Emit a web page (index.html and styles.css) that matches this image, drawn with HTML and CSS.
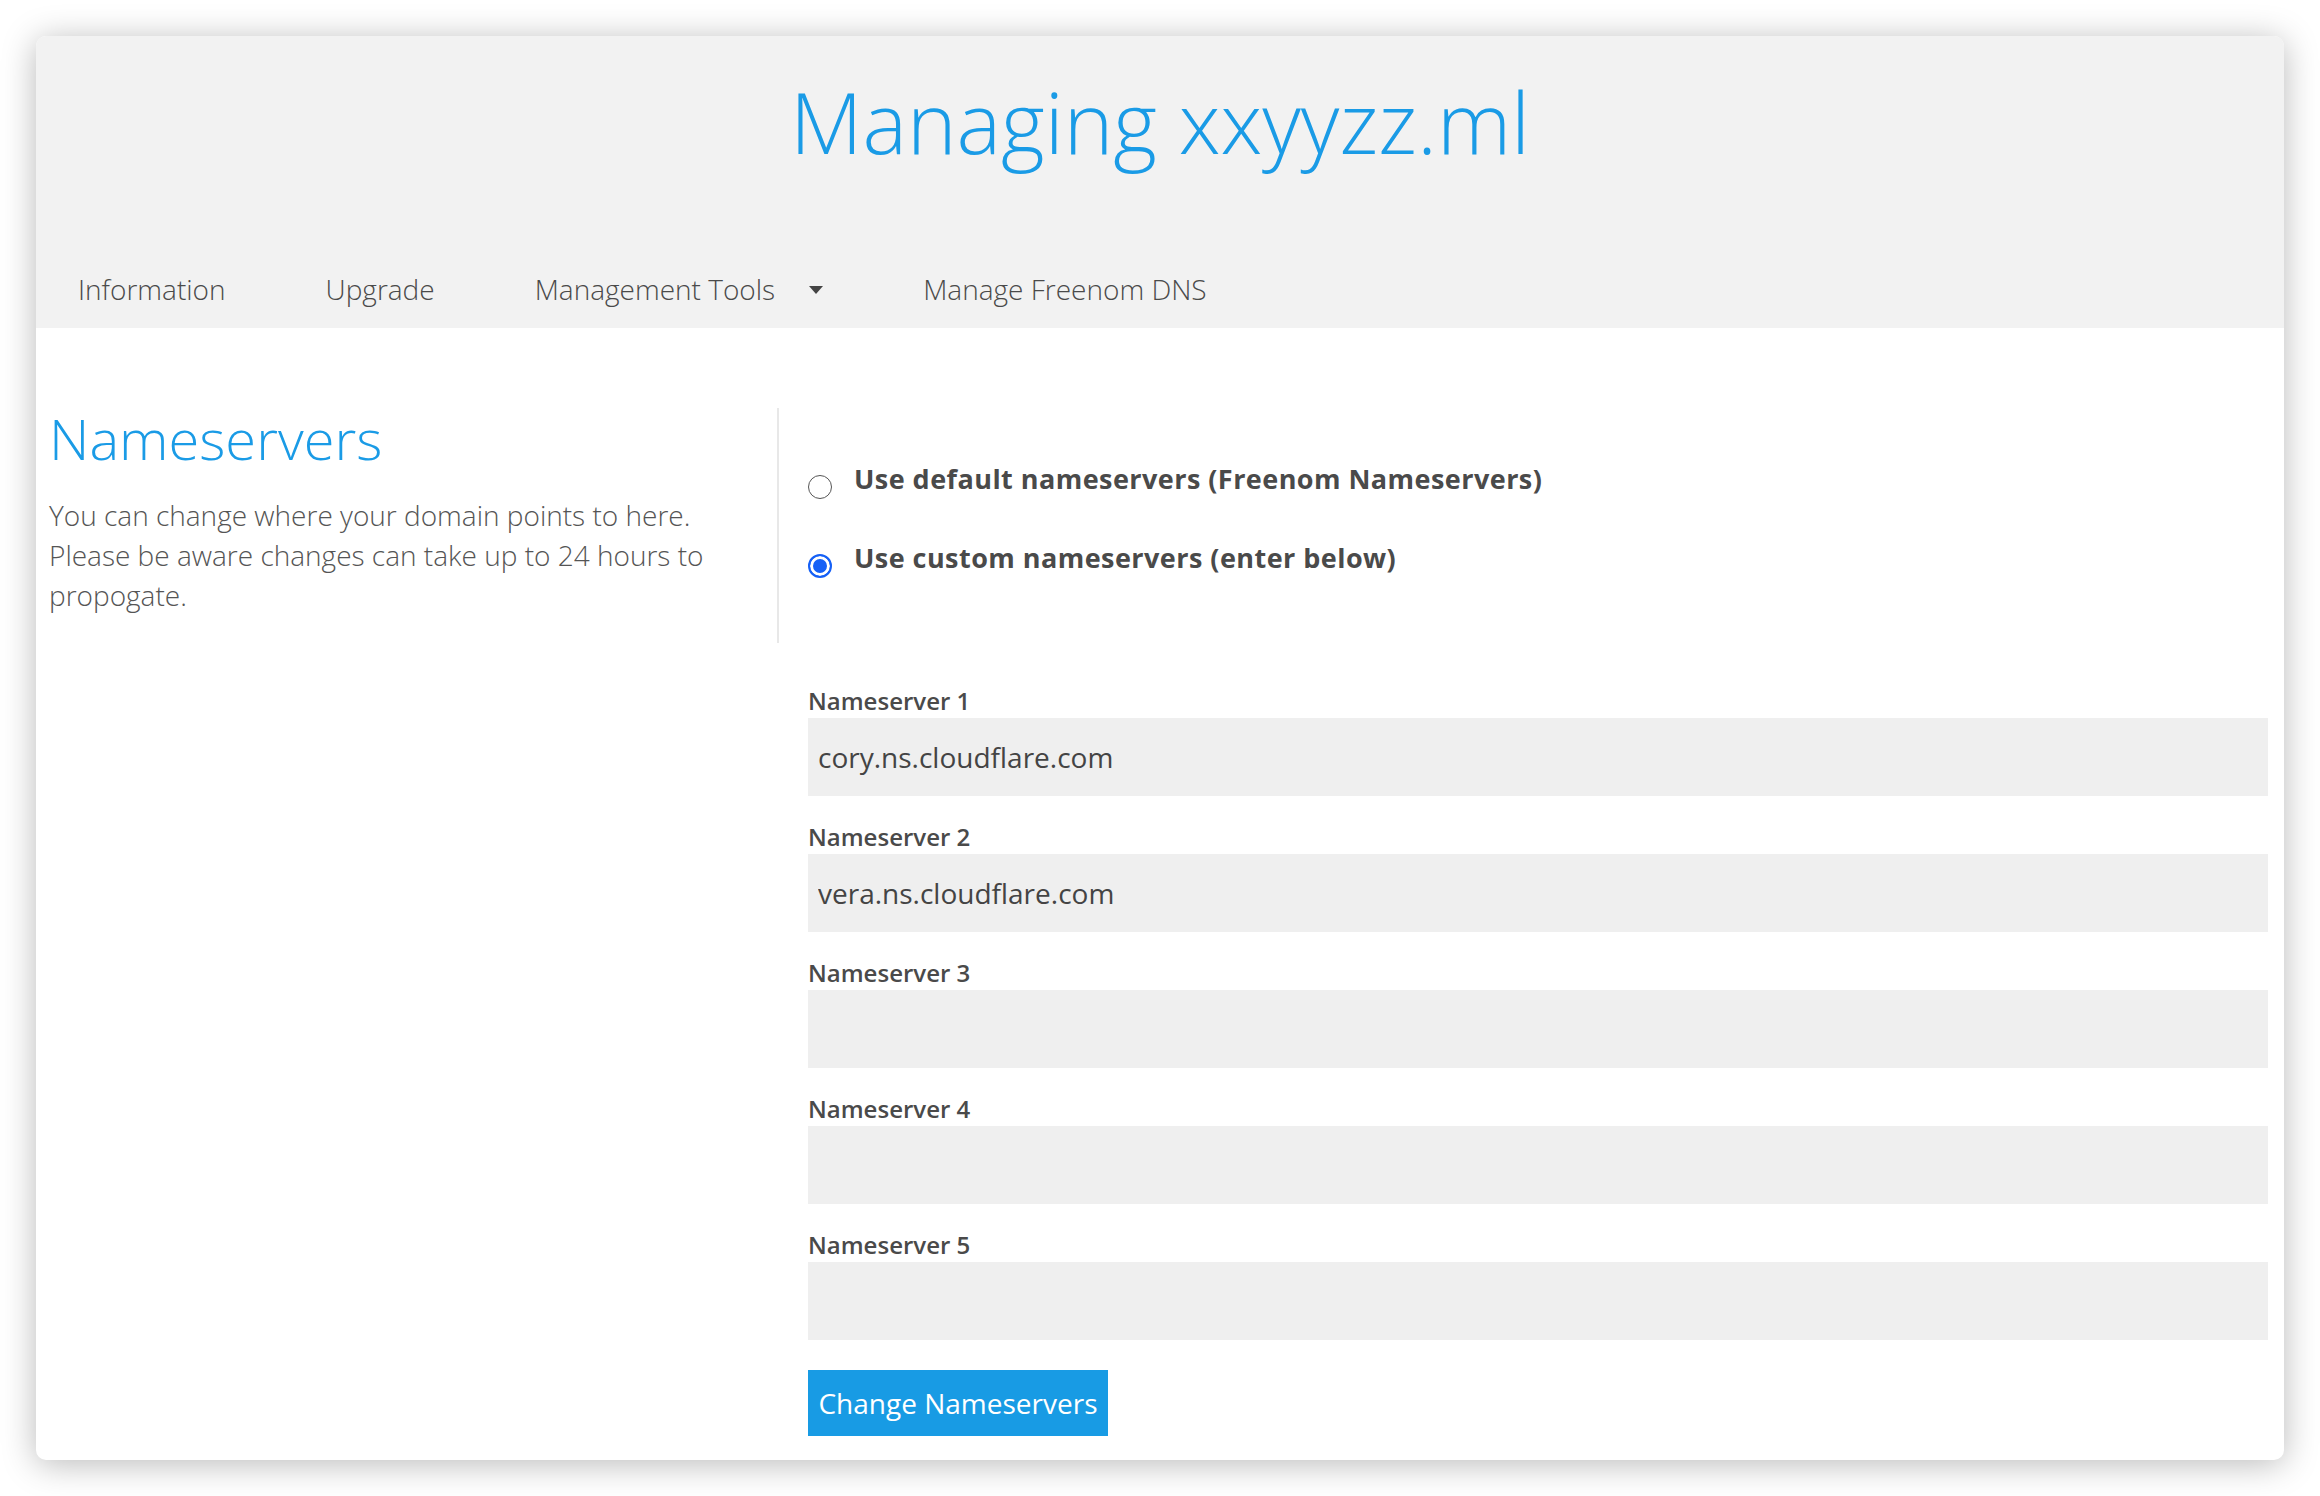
FILE: index.html
```html
<!DOCTYPE html>
<html lang="en">
<head>
<meta charset="utf-8">
<title>Managing xxyyzz.ml</title>
<link rel="stylesheet" href="styles.css">
</head>
<body>
<div class="window">
  <header class="top">
    <h1 class="title">Managing xxyyzz.ml</h1>
    <nav class="tabs">
      <a class="tab">Information</a>
      <a class="tab">Upgrade</a>
      <a class="tab">Management Tools<span class="caret"></span></a>
      <a class="tab">Manage Freenom DNS</a>
    </nav>
  </header>
  <main class="content">
    <section class="intro">
      <h2 class="intro-title">Nameservers</h2>
      <p class="intro-text">You can change where your domain points to here. Please be aware changes can take up to 24 hours to propogate.</p>
    </section>
    <form class="ns-form">
      <div class="choices">
        <label class="choice"><input class="radio" type="radio" name="nstype"><span>Use default nameservers (Freenom Nameservers)</span></label>
        <label class="choice"><input class="radio" type="radio" name="nstype" checked><span>Use custom nameservers (enter below)</span></label>
      </div>
      <div class="field"><label class="field-label">Nameserver 1</label><input class="field-input" type="text" value="cory.ns.cloudflare.com"></div>
      <div class="field"><label class="field-label">Nameserver 2</label><input class="field-input" type="text" value="vera.ns.cloudflare.com"></div>
      <div class="field"><label class="field-label">Nameserver 3</label><input class="field-input" type="text" value=""></div>
      <div class="field"><label class="field-label">Nameserver 4</label><input class="field-input" type="text" value=""></div>
      <div class="field"><label class="field-label">Nameserver 5</label><input class="field-input" type="text" value=""></div>
      <button class="submit" type="button">Change Nameservers</button>
    </form>
  </main>
</div>
</body>
</html>
```
FILE: styles.css
```css
html, body {
  margin: 0;
  padding: 0;
  background: #ffffff;
}

body {
  padding: 36px;
  font-family: "Open Sans", "Noto Sans", "Liberation Sans", sans-serif;
  color: #4a4a4a;
}

.window {
  background: #ffffff;
  border-radius: 10px;
  overflow: hidden;
  box-shadow: 0 4px 34px rgba(0, 0, 0, 0.28);
}

.top {
  background: #f2f2f2;
  height: 292px;
  display: flex;
  flex-direction: column;
}

.title {
  margin: 0;
  padding-top: 36px;
  font-size: 84px;
  line-height: 100px;
  font-weight: 300;
  color: #1a9be6;
  text-align: center;
}

.tabs {
  margin-top: auto;
  padding: 0 0 19px 42px;
  display: flex;
  gap: 100px;
  font-size: 28px;
  line-height: 40px;
  font-weight: 300;
}

.tab {
  color: #4a4a4a;
  text-decoration: none;
  display: flex;
  align-items: center;
}

.caret {
  display: inline-block;
  margin-left: 34px;
  margin-top: 2px;
  width: 0;
  height: 0;
  border-left: 7px solid transparent;
  border-right: 7px solid transparent;
  border-top: 8px solid #444444;
}

.content {
  display: grid;
  grid-template-columns: 728px 1fr;
  padding: 80px 16px 24px 13px;
}

.intro {
  padding-right: 28px;
}

.intro-title {
  margin: 0;
  font-size: 56px;
  line-height: 60px;
  font-weight: 300;
  color: #1a9be6;
}

.intro-text {
  margin: 27px 0 0;
  font-size: 28px;
  line-height: 40px;
  font-weight: 300;
  color: #555555;
}

.ns-form {
  padding-left: 31px;
  display: flex;
  flex-direction: column;
}

.choices {
  margin-left: -31px;
  padding: 51px 0 65px 29px;
  border-left: 2px solid #e8e8e8;
  display: flex;
  flex-direction: column;
  gap: 39px;
}

.choice {
  display: flex;
  align-items: flex-start;
  gap: 22px;
  font-size: 27px;
  letter-spacing: 0.45px;
  line-height: 40px;
  font-weight: 700;
  color: #4a4a4a;
}

.radio {
  appearance: none;
  -webkit-appearance: none;
  margin: 16px 0 0 0;
  width: 24px;
  height: 24px;
  flex: 0 0 24px;
  box-sizing: border-box;
  border-radius: 50%;
  border: 1.5px solid #555555;
  background: #ffffff;
}

.radio:checked {
  border: 2px solid #1560f6;
  background: #1560f6;
  box-shadow: inset 0 0 0 3px #ffffff;
}

.field {
  display: flex;
  flex-direction: column;
  margin-bottom: 24px;
}

.choices + .field {
  margin-top: 41px;
}

.field-label {
  font-size: 24px;
  line-height: 34px;
  font-weight: 600;
  color: #4a4a4a;
}

.field-input {
  height: 78px;
  box-sizing: border-box;
  border: 0;
  background: #efefef;
  padding: 0 10px;
  font-family: inherit;
  font-size: 28px;
  color: #444444;
  outline: none;
}

.submit {
  align-self: flex-start;
  margin-top: 6px;
  height: 66px;
  width: 300px;
  border: 0;
  background: #189be4;
  color: #ffffff;
  font-family: inherit;
  font-size: 28px;
  padding: 0;
  white-space: nowrap;
  text-align: center;
  cursor: pointer;
}
```
